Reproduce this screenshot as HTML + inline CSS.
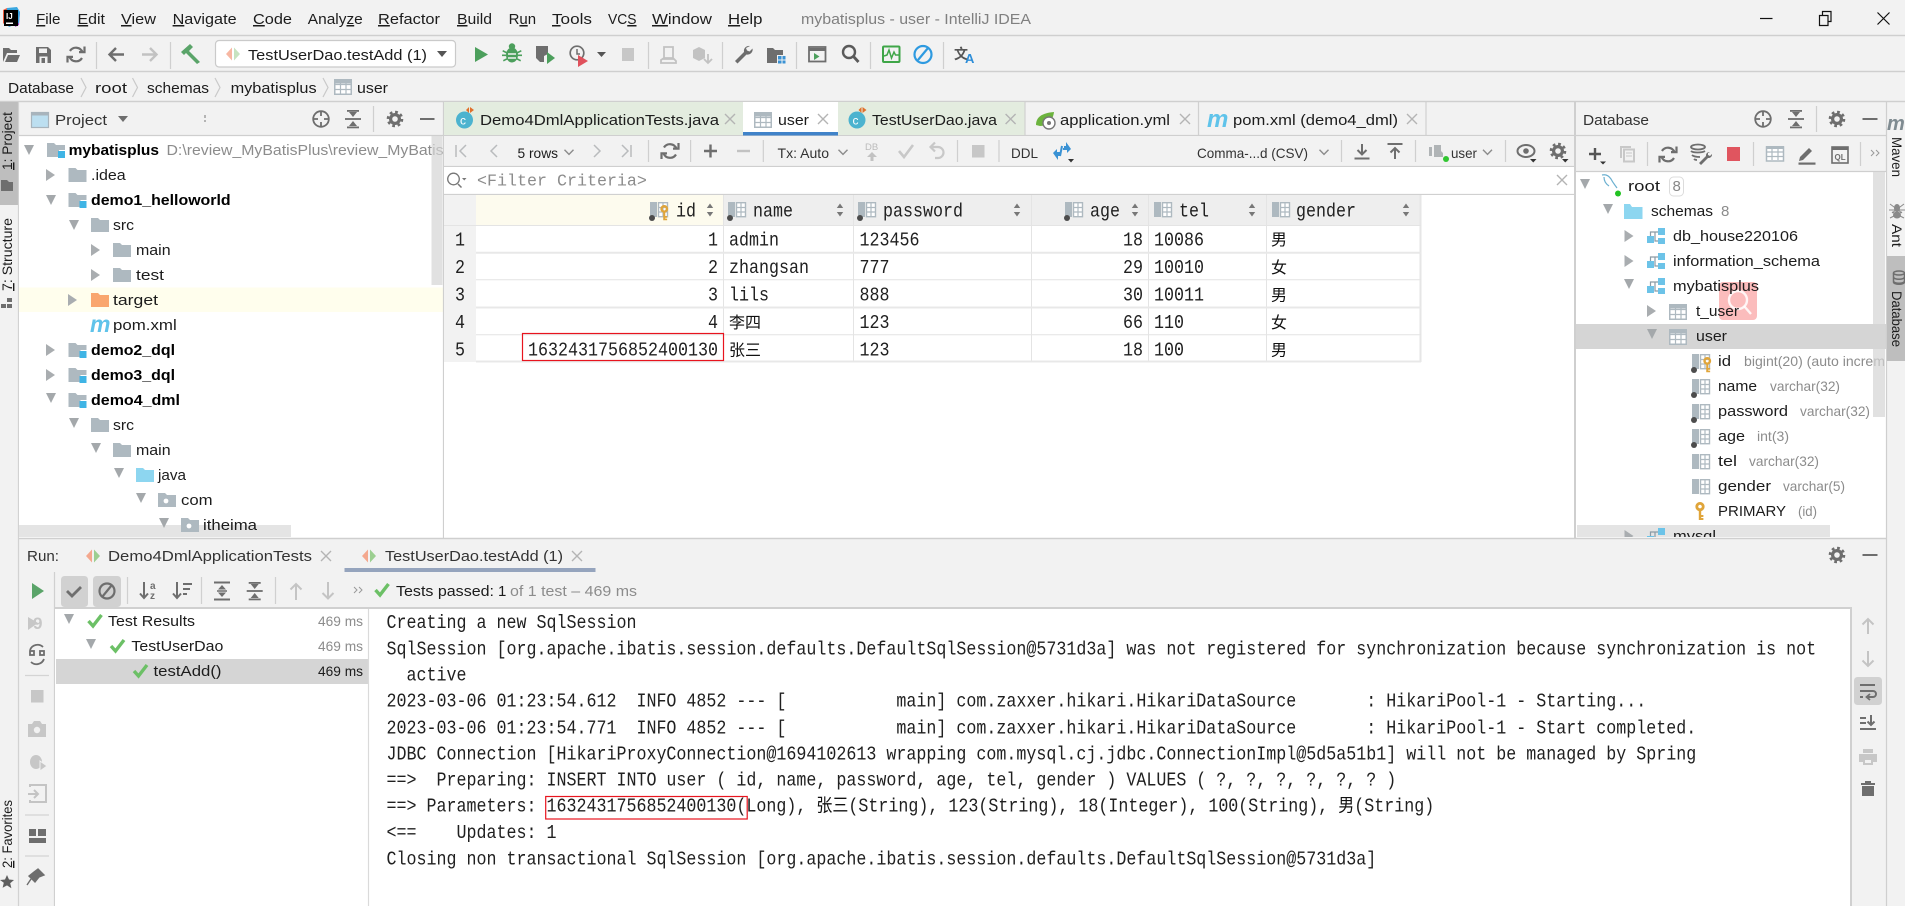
<!DOCTYPE html>
<html><head><meta charset="utf-8"><title>mybatisplus - user - IntelliJ IDEA</title>
<style>
html,body{margin:0;padding:0;background:#f2f2f2;overflow:hidden}
svg{display:block;position:absolute;left:0;top:0}
text{font:15px "Liberation Sans","Noto Sans CJK SC",sans-serif;fill:#1c1c1c;white-space:pre}
.b{font-weight:bold;fill:#000}
.g{fill:#8c8c8c}
.s{font-size:14px}
.m{font:16.67px "Liberation Mono",monospace;fill:#202020}
.c{font:16px "WenQuanYi Zen Hei","Noto Sans CJK SC",sans-serif;fill:#111}
.ic{fill:none;stroke:#6e6e6e;stroke-width:2}
.id{fill:none;stroke:#b9bbbd;stroke-width:2}
.u{text-decoration:underline}
</style></head><body>
<svg width="1905" height="906" viewBox="0 0 1905 906" xmlns="http://www.w3.org/2000/svg">
<defs>
<path id="f" d="M0 0h7l2 2h9v12H0z"/>
<g id="mod"><path d="M0 0h7l2 2h9v5h-6v7H0z" fill="#aeb9c0"/><rect x="11" y="8" width="7" height="7" fill="#3fb4e5"/></g>
<g id="pk"><path d="M0 0h7l2 2h9v12H0z" fill="#aeb9c0"/><circle cx="8" cy="8" r="2.4" fill="#fff"/></g>
<path id="ra" d="M0-6L9 0 0 6z" fill="#a9adb0"/>
<path id="da" d="M-5-5H5L0 5z" fill="#a4a8ab"/>
<g id="tb"><rect x=".75" y=".75" width="16.5" height="14.5" fill="#fff" stroke="#aeb9c0" stroke-width="1.5"/><path d="M1 5.5h16M1 10.5h16M6.5 1v14M12 1v14" stroke="#aeb9c0" stroke-width="1.2" fill="none"/><rect x=".5" y=".5" width="17" height="4" fill="#aeb9c0"/></g>
<g id="col"><rect x="0" y="0" width="7" height="15" fill="#aeb9c0"/><rect x="8.5" y=".7" width="9" height="14" fill="#fff" stroke="#aeb9c0" stroke-width="1.4"/><path d="M9 5.5h8M9 10h8M13 1v14" stroke="#aeb9c0" stroke-width="1.2"/></g>
<circle id="dot" cx="2" cy="16" r="3" fill="#4c4c4c"/>
<g id="key" fill="#e0a53a"><path d="M5 0a4.6 4.6 0 1 1-.01 0zM5 2.8a1.8 1.8 0 1 0 .01 0z" fill-rule="evenodd"/><path d="M3.8 8.6h2.4V18H3.8zM6 13h2.4v2H6zM6 16h2.4v2H6z"/></g>
<g id="sch"><rect x="11" y="0" width="7" height="7" fill="#6cc3e8"/><rect x="0" y="8" width="7" height="7" fill="#6cc3e8"/><rect x="11" y="10" width="7" height="6" fill="#6cc3e8"/><path d="M3.5 8V4H11M8 4v9h3" fill="none" stroke="#8a9aa5" stroke-width="1.2"/></g>
<g id="run"><path d="M0 6L6-.5v13z" fill="#f7b7a2"/><path d="M8-.5l6 6.5-6 6.5z" fill="#c7e3c0"/></g>
<g id="runb"><path d="M0 6L6-.5v13z" fill="#f4a88e"/><path d="M8-.5l6 6.5-6 6.5z" fill="#9ccf91"/></g>
<g id="gear"><circle r="6.9" fill="none" stroke="#6e6e6e" stroke-width="2.8" stroke-dasharray="2.7 2.7"/><circle r="4.4" fill="none" stroke="#6e6e6e" stroke-width="3.2"/></g>
<g id="tgt" fill="none" stroke="#6e6e6e" stroke-width="1.8"><circle r="7.8"/><path d="M-8 0h5M3 0h5M0-8v5M0 3v5"/></g>
<g id="col2" fill="#6e6e6e"><rect x="-8" y="-.9" width="16" height="1.8"/><path d="M0-2l-4-5h8zM0 2l-4 5h8z"/><rect x="-6" y="-9" width="12" height="1.8"/><rect x="-6" y="7.5" width="12" height="1.8"/></g>
<g id="ref" fill="none" stroke="#6e6e6e" stroke-width="2.2"><path d="M6.5-2.2A7 7 0 0 0-6-3.5M-6.5 2.2A7 7 0 0 0 6 3.5"/><path d="M3-2.4h5.5V-8M-3 2.4h-5.5V8"/></g>
<path id="chk" d="M0 6l4.5 5L13 0" fill="none" stroke="#6cc066" stroke-width="3.4"/>
<path id="x" d="M-5-5L5 5M5-5L-5 5" fill="none" stroke="#b4b4b4" stroke-width="1.4"/>
<path id="sort" d="M-3.2-2L0-6.5 3.2-2zM-3.2 2L0 6.5 3.2 2z" fill="#777"/>
<path id="cv" d="M-4.5-2.2L0 2.4 4.5-2.2" fill="none" stroke="#8c8c8c" stroke-width="1.4"/>
<clipPath id="cp"><rect x="19" y="136" width="424" height="402"/></clipPath>
<clipPath id="cd"><rect x="1577" y="172" width="309" height="365"/></clipPath>
</defs>

<!-- base -->
<rect width="1905" height="906" fill="#f2f2f2"/>
<!-- title -->
<path d="M0 35.5h1905M0 71.5h1905M0 101.5h1905" stroke="#cfcfcf" stroke-width="1.4"/>
<g>
<path d="M3 10l4-2 2 6-3 12-3-3z" fill="#ef5a3c"/><path d="M17 8l3 4-1 13-4 2z" fill="#b43ad0"/><path d="M7 8l10-1 3 5-1 11-10 4-4-5z" fill="#3aa7e0"/>
<rect x="4" y="10" width="14" height="16" fill="#000"/><rect x="6" y="22.5" width="7" height="1.5" fill="#fff"/>
<text x="6" y="19" style="font:bold 8px 'Liberation Sans',sans-serif;fill:#fff">IJ</text>
</g>
<text x="36" y="24" textLength="24.5" lengthAdjust="spacingAndGlyphs"><tspan class="u">F</tspan>ile</text>
<text x="77.5" y="24" textLength="27.5" lengthAdjust="spacingAndGlyphs"><tspan class="u">E</tspan>dit</text>
<text x="121" y="24" textLength="35" lengthAdjust="spacingAndGlyphs"><tspan class="u">V</tspan>iew</text>
<text x="172.6" y="24" textLength="64" lengthAdjust="spacingAndGlyphs"><tspan class="u">N</tspan>avigate</text>
<text x="253" y="24" textLength="39" lengthAdjust="spacingAndGlyphs"><tspan class="u">C</tspan>ode</text>
<text x="307.8" y="24" textLength="55" lengthAdjust="spacingAndGlyphs">Analy<tspan class="u">z</tspan>e</text>
<text x="378" y="24" textLength="62" lengthAdjust="spacingAndGlyphs"><tspan class="u">R</tspan>efactor</text>
<text x="457" y="24" textLength="35" lengthAdjust="spacingAndGlyphs"><tspan class="u">B</tspan>uild</text>
<text x="508.6" y="24" textLength="27.5" lengthAdjust="spacingAndGlyphs">R<tspan class="u">u</tspan>n</text>
<text x="552" y="24" textLength="40" lengthAdjust="spacingAndGlyphs"><tspan class="u">T</tspan>ools</text>
<text x="608" y="24" textLength="28.5" lengthAdjust="spacingAndGlyphs">VC<tspan class="u">S</tspan></text>
<text x="652" y="24" textLength="60" lengthAdjust="spacingAndGlyphs"><tspan class="u">W</tspan>indow</text>
<text x="728" y="24" textLength="34.5" lengthAdjust="spacingAndGlyphs"><tspan class="u">H</tspan>elp</text>
<text x="801" y="24" textLength="230" lengthAdjust="spacingAndGlyphs" style="fill:#808080">mybatisplus - user - IntelliJ IDEA</text>
<path d="M1760 18.5h12.5" stroke="#111" stroke-width="1.2"/>
<path d="M1819.5 15.5h8.5v10h-8.5zM1822.5 15v-3.5h8.5v10h-3" fill="none" stroke="#111" stroke-width="1.2"/>
<path d="M1877.5 12.5l12 12M1889.5 12.5l-12 12" stroke="#111" stroke-width="1.2"/>

<!-- main toolbar -->
<path d="M3 48h6l2 2h6v3H7l-4 9zM5 62l3-7h12l-3 7z" fill="#6e6e6e"/>
<path d="M36 47h12l3 3v13H36z" fill="#6e6e6e"/><rect x="39" y="48.5" width="8" height="4.5" fill="#f2f2f2"/><rect x="39.5" y="56.5" width="8" height="6.5" fill="#f2f2f2"/><rect x="41.5" y="58" width="3.5" height="5" fill="#6e6e6e"/>
<use href="#ref" transform="translate(76 54.5)"/>
<path d="M96.5 42v27M170.5 42v27M648.5 42v27M722.5 42v27M796.5 42v27M870.5 42v27M943.5 42v27" stroke="#cfcfcf" stroke-width="1.2"/>
<path d="M124 54.5h-14M116 48l-6.5 6.5L116 61" fill="none" stroke="#6e6e6e" stroke-width="2.4"/>
<path d="M142 54.5h14M150 48l6.5 6.5L150 61" fill="none" stroke="#c2c2c2" stroke-width="2.4"/>
<path d="M181 52l9-8 3 3-4 4 11 11-3 2-11-11-2 2z" fill="#5aa469"/>
<rect x="215.5" y="40.5" width="240" height="26.5" rx="3.5" fill="#fff" stroke="#cacaca" stroke-width="1.2"/>
<use href="#run" x="226" y="48"/>
<text x="248" y="60" textLength="179" lengthAdjust="spacingAndGlyphs">TestUserDao.testAdd (1)</text>
<path d="M437 51h10l-5 6z" fill="#555"/>
<path d="M475 47l13 7.5-13 7.5z" fill="#4c9f5c"/>
<g fill="#4c9f5c"><ellipse cx="512" cy="55" rx="6" ry="7.5"/><path d="M503 50l4 2-.6 1.5-4-2zM521 50l-4 2 .6 1.5 4-2zM503 60l4-2 .6 1.5-4 2zM521 60l-4-2-.6 1.5 4 2zM502 54.5h4v1.6h-4zM518 54.5h4v1.6h-4z"/><circle cx="512" cy="46.5" r="3.2"/></g>
<path d="M508 54h8M508 58h8" stroke="#f2f2f2" stroke-width="1.4"/>
<path d="M536 46h12v8l-4 2v6h-4l-4-4z" fill="#6e6e6e"/><path d="M547 52l8 6-8 6z" fill="#4c9f5c"/>
<circle cx="577" cy="53" r="6.8" fill="none" stroke="#6e6e6e" stroke-width="1.7"/><path d="M577 49v5h3" fill="none" stroke="#6e6e6e" stroke-width="1.5"/><path d="M578 55l10 6-10 6z" fill="#e0515c"/>
<path d="M597 52h9l-4.5 5z" fill="#555"/>
<rect x="622" y="48" width="12" height="13" fill="#c7c7c7"/>
<path d="M664 47h9v12h-9zM661 60l3-2h9l3 3v2h-15z" fill="none" stroke="#c2c2c2" stroke-width="1.8"/>
<path d="M693 50l6-3 6 3v8l-6 3-6-3z" fill="#c2c2c2"/><path d="M708 54v8M704 59l4 4 4-4" fill="none" stroke="#c2c2c2" stroke-width="1.8"/>
<path d="M750 46a5 5 0 0 0-6 6l-9 9 2.5 2.5 9-9a5 5 0 0 0 6-6l-3 3-2.5-1-1-2.5z" fill="#6e6e6e"/>
<path d="M767 48h6l2 2h8v5h-6v8h-10z" fill="#6e6e6e"/><rect x="778" y="56" width="3.5" height="3.5" fill="#3a92d4"/><rect x="782.5" y="56" width="3" height="3.5" fill="#3a92d4"/><rect x="778" y="60.5" width="3.5" height="3" fill="#3a92d4"/><rect x="782.5" y="60.5" width="3" height="3" fill="#3a92d4"/>
<rect x="809" y="47" width="16.5" height="14.5" fill="none" stroke="#6e6e6e" stroke-width="1.8"/><path d="M809 49.5h17" stroke="#6e6e6e" stroke-width="3"/><path d="M814 53l5.5 3.5-5.5 3.5z" fill="#4c9f5c"/>
<circle cx="849" cy="52" r="6" fill="none" stroke="#5a5a5a" stroke-width="2.4"/><path d="M853.5 56.5l5 5.5" stroke="#5a5a5a" stroke-width="2.8"/>
<rect x="883" y="46.5" width="16.5" height="15.5" rx="1" fill="none" stroke="#3fa648" stroke-width="2"/><path d="M884 56l3-1 2-5 2.5 8 2.5-6 1.5 3h3" fill="none" stroke="#3fa648" stroke-width="1.5"/>
<ellipse cx="923" cy="54.5" rx="8.5" ry="8.5" fill="none" stroke="#2e9ae0" stroke-width="2.2"/><path d="M918 60l10-12" stroke="#2e9ae0" stroke-width="2.2"/>
<text x="954" y="59" style="font:bold 14px 'Noto Sans CJK SC',sans-serif;fill:#555">文</text>
<text x="965" y="63" style="font:bold 13px 'Liberation Sans',sans-serif;fill:#2e8ed8">A</text>

<!-- breadcrumb -->
<text x="8" y="93" textLength="66" lengthAdjust="spacingAndGlyphs">Database</text>
<path d="M81 78l5 9.5-5 9.5M132.5 78l5 9.5-5 9.5M215 78l5 9.5-5 9.5M323 78l5 9.5-5 9.5" fill="none" stroke="#c9c9c9" stroke-width="1.2"/>
<text x="95" y="93" textLength="32" lengthAdjust="spacingAndGlyphs">root</text>
<text x="147" y="93" textLength="62" lengthAdjust="spacingAndGlyphs">schemas</text>
<text x="230.6" y="93" textLength="86" lengthAdjust="spacingAndGlyphs">mybatisplus</text>
<use href="#tb" x="334" y="79"/>
<text x="357" y="93" textLength="31" lengthAdjust="spacingAndGlyphs">user</text>

<!-- left stripe -->
<rect x="0" y="102" width="18" height="103" fill="#bebebe"/>
<path d="M18.5 102V906" stroke="#d2d2d2" stroke-width="1.2"/>
<text class="s" transform="translate(12 170) rotate(-90)" textLength="58" lengthAdjust="spacingAndGlyphs"><tspan class="u">1</tspan>: Project</text>
<path d="M1 180h6l2 2h4v9H1z" fill="#6e6e6e"/>
<text class="s" transform="translate(12 291) rotate(-90)" textLength="73" lengthAdjust="spacingAndGlyphs"><tspan class="u">7</tspan>: Structure</text>
<path d="M7 298h5v4H7zM1 304h5v4H1zM7 304h5v4H7z" fill="#6e6e6e"/>
<text class="s" transform="translate(12 868) rotate(-90)" textLength="68" lengthAdjust="spacingAndGlyphs"><tspan class="u">2</tspan>: Favorites</text>
<path d="M7 875l2 4.5 5 .5-3.8 3.3 1.2 5L7 885.4l-4.4 2.4 1.2-5L0 880l5-.5z" fill="#5e5e5e"/>

<!-- project panel -->
<rect x="19" y="136" width="424" height="402" fill="#fff"/>
<path d="M19 135.5H1886" stroke="#cfcfcf" stroke-width="1.2"/>
<rect x="31.5" y="112.5" width="17" height="15" fill="#bcdff0" stroke="#a8b4bc" stroke-width="1.2"/><rect x="31" y="112" width="18" height="3.5" fill="#a8b4bc"/>
<text x="55" y="125" textLength="52" lengthAdjust="spacingAndGlyphs" style="fill:#333">Project</text>
<path d="M118 116h10l-5 6z" fill="#6e6e6e"/>
<path d="M205 115v3M205 120v2" stroke="#777" stroke-width="1"/>
<use href="#tgt" transform="translate(321 119)"/>
<use href="#col2" transform="translate(353 119)"/>
<path d="M373.5 106v26" stroke="#cfcfcf" stroke-width="1.2"/>
<use href="#gear" transform="translate(395 119)"/>
<rect x="420" y="118" width="14.5" height="2" fill="#6e6e6e"/>

<rect x="19" y="287.5" width="424" height="24.5" fill="#fffeed"/>
<rect x="19" y="525" width="272" height="12" fill="#e4e4e4"/>
<g clip-path="url(#cp)">
<use href="#da" transform="translate(29 150)"/><use href="#mod" x="47" y="143"/>
<text class="b" x="68.6" y="155" textLength="90.4" lengthAdjust="spacingAndGlyphs">mybatisplus</text>
<text class="g" x="166.5" y="155" textLength="277" lengthAdjust="spacingAndGlyphs">D:\review_MyBatisPlus\review_MyBatis</text>
<use href="#ra" transform="translate(46 175)"/><use href="#f" x="68.5" y="168" fill="#aeb9c0"/>
<text x="91" y="180" textLength="34.7" lengthAdjust="spacingAndGlyphs">.idea</text>
<use href="#da" transform="translate(51 200)"/><use href="#mod" x="68.5" y="193"/>
<text class="b" x="91" y="205" textLength="139.6" lengthAdjust="spacingAndGlyphs">demo1_helloworld</text>
<use href="#da" transform="translate(74 225)"/><use href="#f" x="91" y="218" fill="#aeb9c0"/>
<text x="113" y="230" textLength="21" lengthAdjust="spacingAndGlyphs">src</text>
<use href="#ra" transform="translate(91 250)"/><use href="#f" x="113" y="243" fill="#aeb9c0"/>
<text x="136" y="255" textLength="34.6" lengthAdjust="spacingAndGlyphs">main</text>
<use href="#ra" transform="translate(91 275)"/><use href="#f" x="113" y="268" fill="#aeb9c0"/>
<text x="136" y="280" textLength="28" lengthAdjust="spacingAndGlyphs">test</text>
<use href="#ra" transform="translate(68 300)"/><use href="#f" x="91" y="293" fill="#f9a66f"/>
<text x="113" y="305" textLength="45" lengthAdjust="spacingAndGlyphs">target</text>
<text x="90" y="332" style="font:italic bold 23px 'Liberation Sans',sans-serif;fill:#5fc3ea;letter-spacing:-1px">m</text>
<text x="113" y="330" textLength="63.7" lengthAdjust="spacingAndGlyphs">pom.xml</text>
<use href="#ra" transform="translate(46 350)"/><use href="#mod" x="68.5" y="343"/>
<text class="b" x="91" y="355" textLength="84" lengthAdjust="spacingAndGlyphs">demo2_dql</text>
<use href="#ra" transform="translate(46 375)"/><use href="#mod" x="68.5" y="368"/>
<text class="b" x="91" y="380" textLength="84" lengthAdjust="spacingAndGlyphs">demo3_dql</text>
<use href="#da" transform="translate(51 398)"/><use href="#mod" x="68.5" y="393"/>
<text class="b" x="91" y="405" textLength="89" lengthAdjust="spacingAndGlyphs">demo4_dml</text>
<use href="#da" transform="translate(74 423)"/><use href="#f" x="91" y="418" fill="#aeb9c0"/>
<text x="113" y="430" textLength="21" lengthAdjust="spacingAndGlyphs">src</text>
<use href="#da" transform="translate(96 448)"/><use href="#f" x="113" y="443" fill="#aeb9c0"/>
<text x="136" y="455" textLength="34.6" lengthAdjust="spacingAndGlyphs">main</text>
<use href="#da" transform="translate(119 473)"/><use href="#f" x="136" y="468" fill="#8dd6f0"/>
<text x="158" y="480" textLength="28" lengthAdjust="spacingAndGlyphs">java</text>
<use href="#da" transform="translate(141 498)"/><use href="#pk" x="158" y="493"/>
<text x="181" y="505" textLength="31.6" lengthAdjust="spacingAndGlyphs">com</text>
<use href="#da" transform="translate(164 523)"/><use href="#pk" x="181" y="518"/>
<text x="203" y="530" textLength="54" lengthAdjust="spacingAndGlyphs">itheima</text>
</g>
<rect x="431.5" y="136" width="11" height="149" fill="#d4d4d4" opacity=".7"/>
<path d="M443.5 102V538" stroke="#cfcfcf" stroke-width="1.2"/>

<!-- editor tabs -->
<rect x="444" y="102" width="299" height="33" fill="#e3ecdf"/>
<rect x="743" y="102" width="95" height="33" fill="#fff"/>
<rect x="838" y="102" width="187" height="33" fill="#e3ecdf"/>
<rect x="743" y="132" width="95" height="3.5" fill="#4083c9"/>
<path d="M1025 102v33M1198.5 102v33M1426 102v33" stroke="#d0d0d0" stroke-width="1.2"/>
<circle cx="464.5" cy="120" r="8.5" fill="#4cb3cf"/><text x="460" y="124.5" style="font:12px 'Liberation Sans',sans-serif;fill:#fff">c</text><path d="M470 107l4 3-4 3zM469 107l-3 3 3 3z" fill="#e0702c"/>
<text x="480" y="125" textLength="239" lengthAdjust="spacingAndGlyphs">Demo4DmlApplicationTests.java</text>
<use href="#x" transform="translate(730 119)"/>
<use href="#tb" x="754" y="112"/>
<text x="778" y="125" textLength="31" lengthAdjust="spacingAndGlyphs">user</text>
<use href="#x" transform="translate(823 119)"/>
<circle cx="857" cy="120" r="8.5" fill="#4cb3cf"/><text x="852.5" y="124.5" style="font:12px 'Liberation Sans',sans-serif;fill:#fff">c</text><path d="M862.5 107l4 3-4 3zM861.5 107l-3 3 3 3z" fill="#e0702c"/>
<text x="872" y="125" textLength="125" lengthAdjust="spacingAndGlyphs">TestUserDao.java</text>
<use href="#x" transform="translate(1010.6 119)"/>
<path d="M1036 125c0-8 6-12 18-13-1 8-6 14-14 14z" fill="#6cb33e"/><circle cx="1049" cy="123" r="6" fill="#fff" stroke="#777" stroke-width="1.4"/><circle cx="1049" cy="123" r="2" fill="#777"/>
<text x="1060" y="125" textLength="110" lengthAdjust="spacingAndGlyphs">application.yml</text>
<use href="#x" transform="translate(1185 119)"/>
<text x="1207" y="127" style="font:italic bold 24px 'Liberation Sans',sans-serif;fill:#5fc3ea;letter-spacing:-1px">m</text>
<text x="1233" y="125" textLength="165" lengthAdjust="spacingAndGlyphs">pom.xml (demo4_dml)</text>
<use href="#x" transform="translate(1412 119)"/>

<!-- editor toolbar -->
<rect x="444" y="136" width="1131" height="30" fill="#f2f2f2"/>
<path d="M444 166.5H1575" stroke="#cfcfcf" stroke-width="1.2"/>
<g style="fill:none;stroke:#b9bbbd;stroke-width:1.5"><path d="M456 145v12M466 145l-6 6 6 6M497 145l-6 6 6 6M594 145l6 6-6 6M622 145l6 6-6 6M631 145v12"/></g>
<text x="517.5" y="158" class="s" textLength="40.5" lengthAdjust="spacingAndGlyphs" style="font-size:13.5px">5 rows</text>
<use href="#cv" transform="translate(569 152)"/>
<path d="M648.5 140v22M690.6 140v22M763.3 140v22M957.5 140v22M999 140v22M1341.5 140v22M1415.5 140v22M1505.5 140v22" stroke="#cfcfcf" stroke-width="1.2"/>
<use href="#ref" transform="translate(670 151)"/>
<path d="M704 151h13M710.5 144.5v13" stroke="#6e6e6e" stroke-width="2.4"/>
<path d="M737 151h13" stroke="#c2c2c2" stroke-width="2.4"/>
<text x="777.5" y="158" textLength="51.5" lengthAdjust="spacingAndGlyphs" style="font-size:14px;fill:#333">Tx: Auto</text>
<use href="#cv" transform="translate(843 152)"/>
<text x="865" y="150" style="font:9.5px 'Liberation Sans',sans-serif;fill:#bbb">DB</text>
<path d="M872 152l-5 5h3.5v4h3v-4h3.5z" fill="#c2c2c2"/>
<path d="M899 151l5 6 9-12" fill="none" stroke="#c8c8c8" stroke-width="2.6"/>
<path d="M932 147h6a5.5 5.5 0 0 1 0 11h-3M935 142.5l-4.5 4.5 4.5 4.5" fill="none" stroke="#c8c8c8" stroke-width="2.2"/>
<rect x="972" y="145" width="12.5" height="12.5" fill="#c7c7c7"/>
<text x="1011" y="158" textLength="27" lengthAdjust="spacingAndGlyphs" style="font-size:14px;fill:#333">DDL</text>
<path d="M1053 153h7v3l-2 0v4zM1053 153l4-4v8zM1071 149h-7v-3h2v-4zM1071 149l-4 4v-8z" fill="#3a92d4"/><path d="M1056 153h5M1063 149h6M1060 156l2-10" stroke="#3a92d4" stroke-width="2" fill="none"/>
<path d="M1068 159h6l-3 3.5z" fill="#333"/>
<text x="1197" y="158" textLength="111" lengthAdjust="spacingAndGlyphs" style="font-size:14px;fill:#333">Comma-...d (CSV)</text>
<use href="#cv" transform="translate(1324 152)"/>
<path d="M1362 144v10M1357.5 150l4.5 4.5 4.5-4.5M1354.5 158.5h15" fill="none" stroke="#6e6e6e" stroke-width="2"/>
<path d="M1395 148v11M1390.5 152.5l4.5-4.5 4.5 4.5M1387.5 144h15" fill="none" stroke="#6e6e6e" stroke-width="2"/>
<path d="M1429 147h3v9h-3zM1434 145h7v6l2 2v4h-9z" fill="#b0b4b6"/><circle cx="1446" cy="159" r="3" fill="#31c631"/>
<text x="1451" y="158" textLength="26" lengthAdjust="spacingAndGlyphs" style="font-size:14px;fill:#333">user</text>
<use href="#cv" transform="translate(1487.5 152)"/>
<ellipse cx="1526" cy="151" rx="8.5" ry="6" fill="none" stroke="#6e6e6e" stroke-width="2"/><circle cx="1526" cy="151" r="2.8" fill="#6e6e6e"/>
<path d="M1530 159h6.5l-3.25 3.5z" fill="#333"/>
<use href="#gear" transform="translate(1558 151)"/>
<path d="M1562 159h6.5l-3.25 3.5z" fill="#333"/>

<!-- filter -->
<rect x="444" y="167" width="1131" height="27" fill="#fff"/>
<path d="M444 194.5H1575" stroke="#d0d0d0" stroke-width="1.2"/>
<circle cx="453.5" cy="179" r="5.8" fill="none" stroke="#777" stroke-width="1.3"/><path d="M458 184l3.5 3.5" stroke="#777" stroke-width="1.5"/><path d="M462 178h4.5l-2.25 2.5z" fill="#777"/>
<text x="477" y="185.5" class="m" style="fill:#8c8c8c">&lt;Filter Criteria&gt;</text>
<use href="#x" transform="translate(1562 180)"/>

<!-- grid -->
<rect x="444" y="195" width="1131" height="343" fill="#fff"/>
<rect x="444" y="195" width="32" height="167" fill="#f2f2f2"/>
<rect x="476" y="195" width="247" height="30" fill="#fdfbee"/>
<rect x="723" y="195" width="697" height="30" fill="#eeeeee"/>
<path d="M723.5 195V362M853.5 195V362M1031.5 195V362M1148.5 195V362M1266.5 195V362" stroke="#e4e4e4" stroke-width="1"/>
<path d="M1420.5 195V362" stroke="#e6e6e6" stroke-width="2"/>
<path d="M444 225.5H1421M476 279.8H1421M476 334.8H1421" stroke="#e4e4e4" stroke-width="1"/>
<path d="M476 252.8H1421M476 307.5H1421M476 361.5H1421" stroke="#e8e8e8" stroke-width="2"/>

<use href="#col" x="650" y="202"/><use href="#dot" x="650" y="202"/><use href="#key" transform="translate(660 205) scale(.85)"/>
<text class="m" transform="translate(676 216.5) scale(1 1.15)">id</text><use href="#sort" transform="translate(710 210)"/>
<use href="#col" x="728" y="202"/><use href="#dot" x="728" y="202"/>
<text class="m" transform="translate(753 216.5) scale(1 1.15)">name</text><use href="#sort" transform="translate(840 210)"/>
<use href="#col" x="858" y="202"/><use href="#dot" x="858" y="202"/>
<text class="m" transform="translate(883 216.5) scale(1 1.15)">password</text><use href="#sort" transform="translate(1017 210)"/>
<use href="#col" x="1065" y="202"/><use href="#dot" x="1065" y="202"/>
<text class="m" transform="translate(1090 216.5) scale(1 1.15)">age</text><use href="#sort" transform="translate(1135 210)"/>
<use href="#col" x="1154" y="202"/>
<text class="m" transform="translate(1179 216.5) scale(1 1.15)">tel</text><use href="#sort" transform="translate(1252 210)"/>
<use href="#col" x="1272" y="202"/>
<text class="m" transform="translate(1296 216.5) scale(1 1.15)">gender</text><use href="#sort" transform="translate(1406 210)"/>

<g text-anchor="middle">
<text class="m" transform="translate(460 245.5) scale(1 1.15)">1</text>
<text class="m" transform="translate(460 273) scale(1 1.15)">2</text>
<text class="m" transform="translate(460 300.5) scale(1 1.15)">3</text>
<text class="m" transform="translate(460 328) scale(1 1.15)">4</text>
<text class="m" transform="translate(460 355.5) scale(1 1.15)">5</text>
</g>
<g text-anchor="end">
<text class="m" transform="translate(718 245.5) scale(1 1.15)">1</text>
<text class="m" transform="translate(718 273) scale(1 1.15)">2</text>
<text class="m" transform="translate(718 300.5) scale(1 1.15)">3</text>
<text class="m" transform="translate(718 328) scale(1 1.15)">4</text>
<text class="m" transform="translate(718 355.5) scale(1 1.15)">1632431756852400130</text>
<text class="m" transform="translate(1143 245.5) scale(1 1.15)">18</text>
<text class="m" transform="translate(1143 273) scale(1 1.15)">29</text>
<text class="m" transform="translate(1143 300.5) scale(1 1.15)">30</text>
<text class="m" transform="translate(1143 328) scale(1 1.15)">66</text>
<text class="m" transform="translate(1143 355.5) scale(1 1.15)">18</text>
</g>
<text class="m" transform="translate(729 245.5) scale(1 1.15)">admin</text>
<text class="m" transform="translate(729 273) scale(1 1.15)">zhangsan</text>
<text class="m" transform="translate(729 300.5) scale(1 1.15)">lils</text>
<text class="c" x="729" y="328">李四</text>
<text class="c" x="729" y="355.5">张三</text>
<text class="m" transform="translate(859.5 245.5) scale(1 1.15)">123456</text>
<text class="m" transform="translate(859.5 273) scale(1 1.15)">777</text>
<text class="m" transform="translate(859.5 300.5) scale(1 1.15)">888</text>
<text class="m" transform="translate(859.5 328) scale(1 1.15)">123</text>
<text class="m" transform="translate(859.5 355.5) scale(1 1.15)">123</text>
<text class="m" transform="translate(1154 245.5) scale(1 1.15)">10086</text>
<text class="m" transform="translate(1154 273) scale(1 1.15)">10010</text>
<text class="m" transform="translate(1154 300.5) scale(1 1.15)">10011</text>
<text class="m" transform="translate(1154 328) scale(1 1.15)">110</text>
<text class="m" transform="translate(1154 355.5) scale(1 1.15)">100</text>
<text class="c" x="1271" y="245">男</text>
<text class="c" x="1271" y="273">女</text>
<text class="c" x="1271" y="300.5">男</text>
<text class="c" x="1271" y="328">女</text>
<text class="c" x="1271" y="355.5">男</text>
<rect x="522.5" y="333.5" width="201" height="27" fill="none" stroke="#e8141e" stroke-width="1.2"/>

<!-- database panel -->
<rect x="1574" y="102" width="2" height="436" fill="#cfcfcf"/>
<rect x="1576" y="172" width="310" height="366" fill="#fff"/>
<path d="M1576 171.5H1886" stroke="#cfcfcf" stroke-width="1.2"/>
<text x="1583" y="125" textLength="66" lengthAdjust="spacingAndGlyphs" style="fill:#333">Database</text>
<use href="#tgt" transform="translate(1763 119)"/>
<use href="#col2" transform="translate(1796 119)"/>
<path d="M1816.5 106v26M1647.5 142v24M1753.5 142v24M1860.5 142v24" stroke="#cfcfcf" stroke-width="1.2"/>
<use href="#gear" transform="translate(1837 119)"/>
<rect x="1862.5" y="118" width="15" height="2" fill="#6e6e6e"/>
<path d="M1589 154h12M1595 148v12" stroke="#555" stroke-width="2.4"/><path d="M1600 161.5h6l-3 3z" fill="#333"/>
<path d="M1620 146h11v2h-9v10h-2z" fill="#c8c8c8"/><rect x="1624" y="149.5" width="10" height="12" fill="none" stroke="#c8c8c8" stroke-width="2"/><path d="M1626 153h6M1626 156h6" stroke="#c8c8c8"/>
<use href="#ref" transform="translate(1668 154.5)"/>
<g fill="none" stroke="#6e6e6e" stroke-width="1.8"><ellipse cx="1698" cy="147" rx="7" ry="2.5"/><path d="M1691 151c2 2 11 2 14 0M1692 155c2 2 6 2 8 2M1694 159c1 1 2 1 3 1"/></g><path d="M1710 152a3.5 3.5 0 0 0-4 4l-7 7 2 2 7-7a3.5 3.5 0 0 0 4-4l-2 2-2-1v-2z" fill="#6e6e6e"/>
<rect x="1727" y="147" width="13" height="14" fill="#e0555f"/>
<rect x="1766.5" y="147" width="17" height="14" fill="#fff" stroke="#aeb9c0" stroke-width="1.5"/><path d="M1766 147.5h18" stroke="#aeb9c0" stroke-width="3"/><path d="M1767 152h16M1767 156.5h16M1772 148v12M1778 148v12" stroke="#aeb9c0" stroke-width="1.2"/>
<path d="M1800 157l9-9 3 3-9 9-4 1z" fill="#6e6e6e"/><rect x="1798.5" y="162.5" width="17" height="2.2" fill="#6e6e6e"/>
<rect x="1832" y="147" width="16" height="16" fill="none" stroke="#6e6e6e" stroke-width="1.6"/><path d="M1832 148.5h16" stroke="#6e6e6e" stroke-width="3"/><text x="1834.5" y="160" style="font:bold 8px 'Liberation Sans',sans-serif;fill:#6e6e6e">QL</text>
<path d="M1871 150l3 3-3 3M1876 150l3 3-3 3" fill="none" stroke="#999" stroke-width="1"/>

<rect x="1719" y="282" width="38" height="38" rx="4" fill="#fbbcbc"/>
<circle cx="1738" cy="300" r="9" fill="none" stroke="#fff" stroke-width="2.4" opacity=".85"/><path d="M1744 306l7 8" stroke="#fff" stroke-width="2.4" opacity=".85"/>

<rect x="1576" y="324" width="310" height="25" fill="#d5d5d5"/>
<rect x="1577" y="525" width="253" height="12" fill="#e4e4e4"/>
<g clip-path="url(#cd)">
<use href="#da" transform="translate(1585 184)"/>
<path d="M1602 175c4-1 7 1 9 4 2 4 4 6 6 9M1604 177c0 4 2 7 5 9" fill="none" stroke="#6cb0d0" stroke-width="1.2"/><circle cx="1618" cy="193.5" r="3" fill="#22c322"/>
<text x="1628" y="191" textLength="32" lengthAdjust="spacingAndGlyphs">root</text>
<rect x="1669.5" y="177" width="14" height="19" rx="4" fill="#fff" stroke="#dcdcdc"/><text x="1672.5" y="191" style="fill:#888">8</text>
<use href="#da" transform="translate(1608 209)"/><path d="M1624 204h6l2 3h10.5v12h-18.5z" fill="#8dd6f0"/>
<text x="1651" y="216" textLength="62" lengthAdjust="spacingAndGlyphs">schemas</text>
<text class="g" x="1721" y="216">8</text>
<use href="#ra" transform="translate(1624.5 236)"/><use href="#sch" x="1647" y="228"/>
<text x="1673" y="241" textLength="125" lengthAdjust="spacingAndGlyphs">db_house220106</text>
<use href="#ra" transform="translate(1624.5 261)"/><use href="#sch" x="1647" y="253"/>
<text x="1673" y="266" textLength="147" lengthAdjust="spacingAndGlyphs">information_schema</text>
<use href="#da" transform="translate(1629 284)"/><use href="#sch" x="1647" y="278"/>
<text x="1673" y="291" textLength="86" lengthAdjust="spacingAndGlyphs">mybatisplus</text>
<use href="#ra" transform="translate(1647 311)"/><use href="#tb" x="1669" y="304"/>
<text x="1696" y="316" textLength="43" lengthAdjust="spacingAndGlyphs">t_user</text>
<use href="#da" transform="translate(1652 334)"/><use href="#tb" x="1669" y="329"/>
<text x="1696" y="341" textLength="31" lengthAdjust="spacingAndGlyphs">user</text>
<use href="#col" x="1692" y="354"/><use href="#dot" x="1692" y="354"/><use href="#key" transform="translate(1703 357) scale(.85)"/>
<text x="1718" y="366" textLength="13" lengthAdjust="spacingAndGlyphs">id</text>
<text class="g s" x="1744" y="366" textLength="141" lengthAdjust="spacingAndGlyphs">bigint(20) (auto increm</text>
<use href="#col" x="1692" y="379"/><use href="#dot" x="1692" y="379"/>
<text x="1718" y="391" textLength="39" lengthAdjust="spacingAndGlyphs">name</text>
<text class="g s" x="1770" y="391" textLength="70" lengthAdjust="spacingAndGlyphs">varchar(32)</text>
<use href="#col" x="1692" y="404"/><use href="#dot" x="1692" y="404"/>
<text x="1718" y="416" textLength="70" lengthAdjust="spacingAndGlyphs">password</text>
<text class="g s" x="1800" y="416" textLength="70" lengthAdjust="spacingAndGlyphs">varchar(32)</text>
<use href="#col" x="1692" y="429"/><use href="#dot" x="1692" y="429"/>
<text x="1718" y="441" textLength="27" lengthAdjust="spacingAndGlyphs">age</text>
<text class="g s" x="1757" y="441" textLength="32" lengthAdjust="spacingAndGlyphs">int(3)</text>
<use href="#col" x="1692" y="454"/>
<text x="1718" y="466" textLength="19" lengthAdjust="spacingAndGlyphs">tel</text>
<text class="g s" x="1749" y="466" textLength="70" lengthAdjust="spacingAndGlyphs">varchar(32)</text>
<use href="#col" x="1692" y="479"/>
<text x="1718" y="491" textLength="53" lengthAdjust="spacingAndGlyphs">gender</text>
<text class="g s" x="1783" y="491" textLength="62" lengthAdjust="spacingAndGlyphs">varchar(5)</text>
<use href="#key" transform="translate(1695 502)"/>
<text x="1718" y="516" textLength="68" lengthAdjust="spacingAndGlyphs">PRIMARY</text>
<text class="g s" x="1798" y="516" textLength="19" lengthAdjust="spacingAndGlyphs">(id)</text>
<use href="#ra" transform="translate(1624.5 536)"/><use href="#sch" x="1647" y="528"/>
<text x="1673" y="541" textLength="43" lengthAdjust="spacingAndGlyphs">mysql</text>
</g>
<rect x="1873" y="172" width="12" height="245" fill="#d4d4d4" opacity=".7"/>
<path d="M1886.5 102V906" stroke="#cfcfcf" stroke-width="1.2"/>

<!-- right stripe -->
<text x="1887" y="130" style="font:italic bold 20px 'Liberation Sans',sans-serif;fill:#7f8b91;letter-spacing:-1px">m</text>
<text class="s" transform="translate(1892 137) rotate(90)" textLength="40" lengthAdjust="spacingAndGlyphs">Maven</text>
<g fill="#8a8a8a"><ellipse cx="1897" cy="208" rx="3" ry="4"/><ellipse cx="1897" cy="215" rx="4" ry="3.5"/><path d="M1890 204l12 9M1904 204l-12 9M1889 210h16M1890 218l12-6M1904 218l-12-6" stroke="#8a8a8a" fill="none"/></g>
<text class="s" transform="translate(1892 224) rotate(90)" textLength="23" lengthAdjust="spacingAndGlyphs">Ant</text>
<rect x="1887" y="256" width="18" height="105" fill="#bebebe"/>
<g fill="none" stroke="#6e6e6e" stroke-width="1.5"><ellipse cx="1899" cy="273" rx="5.5" ry="2"/><path d="M1893.5 273v9c0 3 11 3 11 0v-9M1893.5 277c0 3 11 3 11 0M1893.5 281c0 3 11 3 11 0"/></g>
<text class="s" transform="translate(1892 291) rotate(90)" textLength="56" lengthAdjust="spacingAndGlyphs">Database</text>

<!-- run tool window -->
<path d="M19 538.5H1886" stroke="#cfcfcf" stroke-width="1.4"/>
<text x="27" y="561" textLength="32" lengthAdjust="spacingAndGlyphs" style="fill:#333">Run:</text>
<use href="#runb" x="86" y="550"/>
<text x="108" y="561" textLength="204" lengthAdjust="spacingAndGlyphs" style="fill:#333">Demo4DmlApplicationTests</text>
<use href="#x" transform="translate(326 556)"/>
<use href="#runb" x="362" y="550"/>
<text x="385" y="561" textLength="178" lengthAdjust="spacingAndGlyphs" style="fill:#333">TestUserDao.testAdd (1)</text>
<use href="#x" transform="translate(577 556)"/>
<rect x="344.5" y="568" width="251" height="4" fill="#95a4bd"/>
<use href="#gear" transform="translate(1837 555)"/>
<rect x="1862.5" y="554" width="15" height="2" fill="#6e6e6e"/>

<!-- run toolbar -->
<path d="M32 583l12 8-12 8z" fill="#5aa469"/>
<rect x="61" y="576" width="27" height="31" rx="3.5" fill="#d1d1d1"/>
<rect x="93" y="576" width="28" height="31" rx="3.5" fill="#d1d1d1"/>
<path d="M67 591l5 5 9-9" fill="none" stroke="#6e6e6e" stroke-width="2.8"/>
<circle cx="107" cy="591" r="7.5" fill="none" stroke="#6e6e6e" stroke-width="2.2"/><path d="M102.5 596.5l9-11" stroke="#6e6e6e" stroke-width="2.2"/>
<path d="M127.5 577v27M201.5 577v27M275.5 577v27" stroke="#d0d0d0" stroke-width="1.2"/>
<path d="M144 582v16M140 593.5l4 4.5 4-4.5" fill="none" stroke="#6e6e6e" stroke-width="2"/>
<text x="150" y="589" style="font:bold 10px 'Liberation Sans',sans-serif;fill:#6e6e6e">a</text><text x="150" y="599" style="font:bold 10px 'Liberation Sans',sans-serif;fill:#6e6e6e">z</text>
<path d="M177 582v16M173 593.5l4 4.5 4-4.5" fill="none" stroke="#6e6e6e" stroke-width="2"/><path d="M183 584h9M183 589h7M183 594h4" stroke="#6e6e6e" stroke-width="2"/>
<path d="M214 582.5h16M214 599.5h16" stroke="#6e6e6e" stroke-width="2"/><path d="M222 585l-4 4.5h8zM222 597l-4-4.5h8z" fill="#6e6e6e"/><path d="M217 591h10" stroke="#6e6e6e" stroke-width="1.5"/>
<use href="#col2" transform="translate(254.7 591)"/>
<path d="M296 600v-16M290.5 589.5L296 584l5.5 5.5" fill="none" stroke="#c4c4c4" stroke-width="2"/>
<path d="M328 582v16M322.5 593l5.500 5.500 5.500-5.500" fill="none" stroke="#c4c4c4" stroke-width="2"/>
<path d="M354 587l3 3-3 3M359 587l3 3-3 3" fill="none" stroke="#999" stroke-width="1"/>
<use href="#chk" x="375.5" y="584" style="stroke:#4fa65a"/>
<text x="396" y="596" textLength="98" lengthAdjust="spacingAndGlyphs">Tests passed:</text>
<text x="498" y="596">1</text>
<text class="g" x="510" y="596" textLength="127" lengthAdjust="spacingAndGlyphs">of 1 test – 469 ms</text>

<!-- run left strip -->
<path d="M54.5 572V906" stroke="#d0d0d0" stroke-width="1.2"/>
<path d="M28 617l10 6-10 7z" fill="#c7c7c7"/><text x="33" y="629" style="font:bold 17px 'Liberation Sans',sans-serif;fill:#c7c7c7">9</text>
<g fill="none" stroke="#6e6e6e" stroke-width="1.8"><path d="M30 650a8 8 0 0 1 13-3M44 659a8 8 0 0 1-13 3"/><rect x="30" y="651" width="4" height="4"/><rect x="40" y="651" width="4" height="4"/></g>
<path d="M25 675.5h24M25 815h24M25 856h24" stroke="#d4d4d4" stroke-width="1.2"/>
<rect x="31" y="690" width="12.5" height="12.5" fill="#c7c7c7"/>
<path d="M28 724h4l2-3h6l2 3h4v13H28z" fill="#c7c7c7"/><circle cx="37" cy="730" r="3.2" fill="#f2f2f2"/>
<g fill="#c7c7c7"><ellipse cx="36" cy="762" rx="6" ry="7"/><path d="M29 756l3 2M43 756l-3 2M28 762h3M28 768l3-2"/></g><path d="M40 761l7 5-7 5z" fill="#c7c7c7" stroke="#f2f2f2"/>
<g fill="none" stroke="#c4c4c4" stroke-width="2"><path d="M30 787v-2h16v17H30v-2M28 794h10M34 790l4 4-4 4"/></g>
<path d="M29 829h7v7h-7zM38 829h8v7h-8zM29 838h17v5H29z" fill="#6e6e6e"/>
<path d="M38 869l6 6-5 2-4 5-6-6 5-4zM31 879l-4 6" fill="#6e6e6e" stroke="#6e6e6e" stroke-width="1.4"/>

<!-- run content -->
<rect x="55" y="609" width="1795" height="297" fill="#fff"/>
<rect x="55" y="607" width="1797" height="2" fill="#d0d0d0"/>
<rect x="1850" y="607" width="2" height="299" fill="#d0d0d0"/>
<rect x="56" y="659" width="312" height="25" fill="#d5d5d5"/>
<path d="M368.5 609V906" stroke="#dadada" stroke-width="1.2"/>
<use href="#da" transform="translate(69 619)"/><use href="#chk" x="88.500" y="615"/>
<text x="108" y="626" textLength="87" lengthAdjust="spacingAndGlyphs">Test Results</text>
<text class="g s" x="318" y="626" textLength="45" lengthAdjust="spacingAndGlyphs">469 ms</text>
<use href="#da" transform="translate(91 644)"/><use href="#chk" x="111" y="640"/>
<text x="131.4" y="651" textLength="92" lengthAdjust="spacingAndGlyphs">TestUserDao</text>
<text class="g s" x="318" y="651" textLength="45" lengthAdjust="spacingAndGlyphs">469 ms</text>
<use href="#chk" x="134" y="665"/>
<text x="153.5" y="676" textLength="68" lengthAdjust="spacingAndGlyphs">testAdd()</text>
<text class="s" x="318" y="676" textLength="45" lengthAdjust="spacingAndGlyphs">469 ms</text>

<!-- console -->
<text class="m" transform="translate(386.5 628) scale(1 1.15)">Creating a new SqlSession</text>
<text class="m" transform="translate(386.5 654.5) scale(1 1.15)">SqlSession [org.apache.ibatis.session.defaults.DefaultSqlSession@5731d3a] was not registered for synchronization because synchronization is not</text>
<text class="m" transform="translate(386.5 680.5) scale(1 1.15)">  active</text>
<text class="m" transform="translate(386.5 706.5) scale(1 1.15)">2023-03-06 01:23:54.612  INFO 4852 --- [           main] com.zaxxer.hikari.HikariDataSource       : HikariPool-1 - Starting...</text>
<text class="m" transform="translate(386.5 733.5) scale(1 1.15)">2023-03-06 01:23:54.771  INFO 4852 --- [           main] com.zaxxer.hikari.HikariDataSource       : HikariPool-1 - Start completed.</text>
<text class="m" transform="translate(386.5 759.5) scale(1 1.15)">JDBC Connection [HikariProxyConnection@1694102613 wrapping com.mysql.cj.jdbc.ConnectionImpl@5d5a51b1] will not be managed by Spring</text>
<text class="m" transform="translate(386.5 785.5) scale(1 1.15)">==&gt;  Preparing: INSERT INTO user ( id, name, password, age, tel, gender ) VALUES ( ?, ?, ?, ?, ?, ? )</text>
<text class="m" transform="translate(386.5 811.5) scale(1 1.15)">==&gt; Parameters: 1632431756852400130(Long), <tspan class="c">张三</tspan>(String), 123(String), 18(Integer), 100(String), <tspan class="c">男</tspan>(String)</text>
<text class="m" transform="translate(386.5 838) scale(1 1.15)">&lt;==    Updates: 1</text>
<text class="m" transform="translate(386.5 864.5) scale(1 1.15)">Closing non transactional SqlSession [org.apache.ibatis.session.defaults.DefaultSqlSession@5731d3a]</text>
<rect x="545.7" y="796.5" width="201.5" height="22.5" fill="none" stroke="#e8141e" stroke-width="1.2"/>

<!-- console right tools -->
<path d="M1868 634v-15M1862.5 624.5l5.5-5.5 5.5 5.5" fill="none" stroke="#c4c4c4" stroke-width="2"/>
<path d="M1868 651v15M1862.5 660.5l5.5 5.5 5.5-5.5" fill="none" stroke="#c4c4c4" stroke-width="2"/>
<rect x="1854" y="677" width="28" height="28" rx="3.5" fill="#d1d1d1"/>
<path d="M1860 685h15M1860 691h13a3 3 0 0 1 0 6h-5M1860 697h3" fill="none" stroke="#6e6e6e" stroke-width="2"/><path d="M1870 694l-3.5 3 3.5 3" fill="none" stroke="#6e6e6e" stroke-width="1.8"/>
<path d="M1860 718h6M1860 723h6M1860 729h16M1871 715v10M1867.5 721.5l3.5 3.5 3.5-3.5" fill="none" stroke="#6e6e6e" stroke-width="2"/>
<path d="M1863 749h10v4h-10zM1859 754h18v8h-4v3h-10v-3h-4z" fill="#c7c7c7"/><rect x="1865" y="760" width="6" height="3" fill="#f2f2f2"/>
<path d="M1861 783h14v2h-14zM1865 781h6v2h-6zM1862 786h12v10h-12z" fill="#6e6e6e"/>
</svg>
</body></html>
